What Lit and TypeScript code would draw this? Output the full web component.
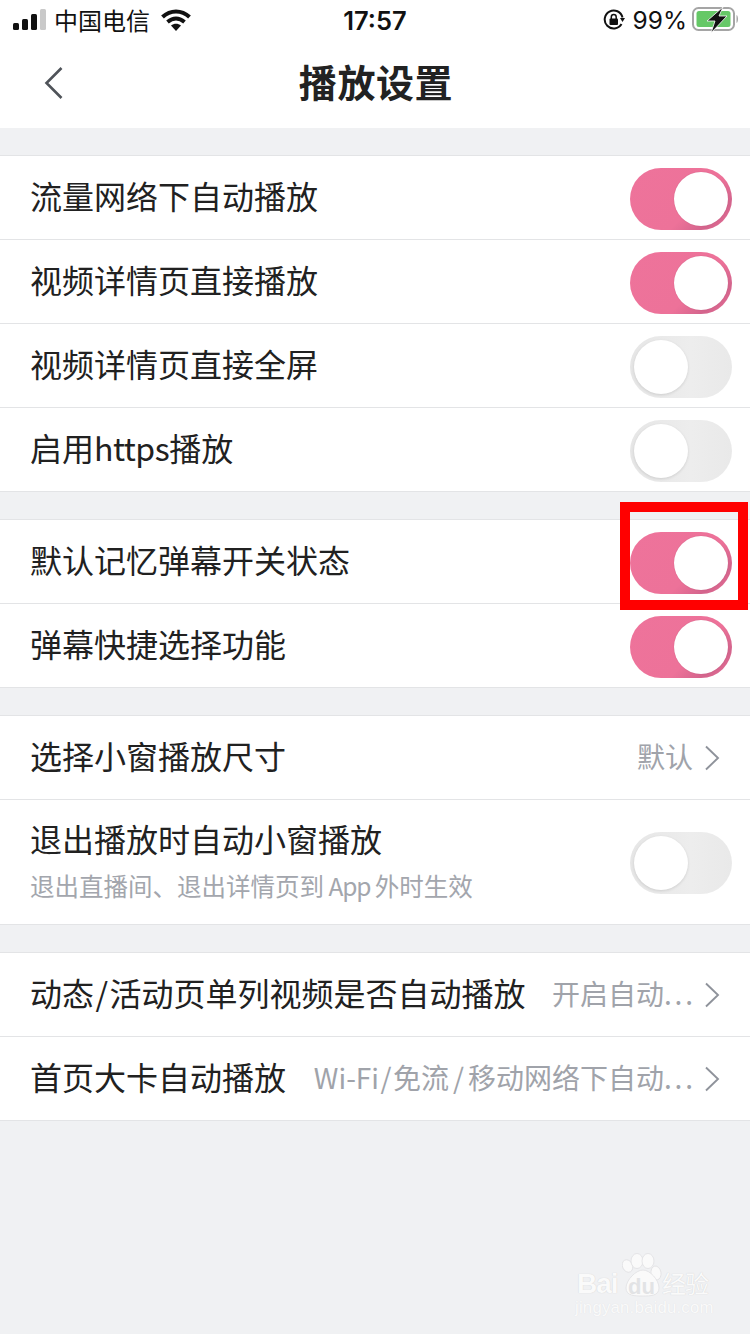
import { LitElement, html, css, svg } from 'lit';
import { customElement, property } from 'lit/decorators.js';

@customElement('ui-switch')
export class UISwitch extends LitElement {
  @property({ type: Boolean }) on = false;

  static styles = css`
    :host {
      display: block;
      flex: none;
      margin-top: 2px;
    }

    .track {
      display: flex;
      width: 102px;
      height: 62px;
      box-sizing: border-box;
      padding: 4px;
      border-radius: 31px;
      background: linear-gradient(90deg, #e6e6e6 0, #ededed 60%, #e9e9e9 100%);
    }

    .track.on {
      justify-content: flex-end;
      background: linear-gradient(135deg, #ee739b 0, #ed7299 62%, #d3648c 82%, #ea7098 100%);
    }

    .knob {
      width: 54px;
      height: 54px;
      border-radius: 50%;
      background: #fff;
      box-shadow: 0 1px 3px rgba(0, 0, 0, 0.12);
    }

    .track.on .knob {
      box-shadow: 0 0 1px rgba(120, 30, 60, 0.3);
    }
  `;

  render() {
    return html`<div class="track ${this.on ? 'on' : ''}"><div class="knob"></div></div>`;
  }
}

const chevron = html`<svg class="chev" width="16" height="26" viewBox="0 0 16 26">
  <path d="M2 1.5 L14 13 L2 24.5" fill="none" stroke="#8f939b" stroke-width="1.9" />
</svg>`;

const paw = svg`
  <g fill="#fafafa" stroke="#dfe0e2" stroke-width="0.8">
    <ellipse cx="5.500" cy="16" rx="5" ry="6.500" transform="rotate(-25 5.500 16)" />
    <ellipse cx="15" cy="11" rx="6" ry="7.500" />
    <ellipse cx="26" cy="11" rx="6" ry="7.500" />
    <ellipse cx="34" cy="23" rx="5" ry="7" transform="rotate(-10 34 23)" />
    <path d="M4 38 C4 30 14 20 21 20 C28 20 37 30 37 38 C37 46 28 46 21 46 C13 46 4 46 4 38 Z" />
  </g>`;

@customElement('app-root')
export class AppRoot extends LitElement {
  static styles = css`
    :host {
      display: block;
      position: relative;
      width: 750px;
      height: 1334px;
      overflow: hidden;
      background: #f0f1f3;
      font-family: 'Noto Sans CJK SC', 'Liberation Sans', sans-serif;
      color: #212121;
    }

    .top {
      height: 128px;
      background: #fff;
    }

    .status {
      display: flex;
      align-items: center;
      height: 40px;
      padding: 0 10px 0 13px;
      box-sizing: border-box;
      color: #111;
    }

    .carrier {
      font-size: 24px;
      line-height: 40px;
      margin-left: 8px;
    }

    .wifi {
      margin-left: 11px;
    }

    .time {
      position: absolute;
      left: 0;
      right: 0;
      top: 0;
      text-align: center;
      font-family: 'Inter', 'Liberation Sans', sans-serif;
      font-size: 25.5px;
      font-weight: 600;
      line-height: 42px;
    }

    .status-right {
      display: flex;
      align-items: center;
      margin-left: auto;
    }

    .pct {
      font-family: 'Inter', 'Liberation Sans', sans-serif;
      font-size: 24.5px;
      margin: 0 5px 0 8px;
      line-height: 42px;
    }

    .nav {
      display: flex;
      align-items: center;
      justify-content: center;
      position: relative;
      height: 88px;
    }

    .back {
      position: absolute;
      left: 44px;
      top: 26px;
    }

    .title {
      font-size: 38px;
      font-weight: 700;
      line-height: 88px;
      letter-spacing: 0.6px;
      margin: -6px 0 0 2px;
      color: #222;
    }

    .group {
      margin-top: 27px;
      background: #fff;
      border-top: 1px solid #e3e4e6;
    }

    .row {
      display: flex;
      align-items: center;
      height: 84px;
      box-sizing: border-box;
      padding: 0 18px 0 30px;
      border-bottom: 1px solid #e3e4e6;
    }

    .row.tall {
      height: 125px;
    }

    .label {
      flex: none;
      font-size: 32px;
      line-height: 44px;
      white-space: nowrap;
    }

    .row > .label {
      margin-bottom: 6px;
    }

    .tall .label {
      margin-top: -5px;
    }

    .https {
      letter-spacing: -0.5px;
    }

    .sl {
      margin: 0 1.5px;
    }

    .sub {
      font-size: 24.5px;
      line-height: 36px;
      margin-top: 8px;
      color: #a3a6ad;
      white-space: nowrap;
      word-spacing: -1px;
    }

    .app {
      letter-spacing: -1.2px;
    }

    .spacer {
      flex: 1;
    }

    .value {
      font-size: 28px;
      line-height: 44px;
      margin-bottom: 4px;
      color: #a0a3aa;
      white-space: nowrap;
      margin-right: 11px;
    }

    .dots {
      letter-spacing: 2.8px;
      margin-right: -2.800px;
    }

    .vs1 {
      margin: 0 1.5px;
    }

    .vs2 {
      margin: 0 4px;
    }

    .chev {
      flex: none;
      margin-right: 12px;
    }

    .mark {
      position: absolute;
      left: 620px;
      top: 502px;
      width: 128px;
      height: 108px;
      box-sizing: border-box;
      border: 10px solid #ff0000;
    }

    .wm {
      position: absolute;
      left: 575px;
      top: 1250px;
      width: 140px;
      height: 70px;
      color: #fafafa;
      text-shadow: 0 0 1px #c9cacc;
    }

    .wm svg {
      position: absolute;
      left: 47px;
      top: 0;
    }

    .wm span {
      position: absolute;
      white-space: nowrap;
    }

    .bai {
      left: 2px;
      top: 16px;
      font: 700 28px/36px 'Liberation Sans', sans-serif;
      letter-spacing: -1px;
    }

    .du {
      left: 53px;
      top: 26px;
      font: 700 22px/22px 'Liberation Sans', sans-serif;
      color: #e2e3e5;
      text-shadow: none;
    }

    .jy {
      left: 87px;
      top: 17px;
      font-size: 24px;
      line-height: 32px;
      letter-spacing: -1px;
    }

    .wm .url {
      left: 0;
      top: 47px;
      font: 16.8px/22px 'Liberation Sans', sans-serif;
      letter-spacing: 0.2px;
      text-shadow: 0 0 1px #dcdde0;
    }
  `;

  private switchRow(label: unknown, on: boolean) {
    return html`<div class="row">
      <div class="label">${label}</div>
      <div class="spacer"></div>
      <ui-switch ?on=${on}></ui-switch>
    </div>`;
  }

  private linkRow(label: unknown, value: unknown) {
    return html`<div class="row">
      <div class="label">${label}</div>
      <div class="spacer"></div>
      <div class="value">${value}</div>
      ${chevron}
    </div>`;
  }

  render() {
    return html`
      <div class="top">
        <div class="status">
          <svg width="33" height="22" viewBox="0 0 33 22">
            <rect x="0" y="14" width="6" height="7" rx="1.5" fill="#111" />
            <rect x="9" y="10" width="6" height="11" rx="1.5" fill="#111" />
            <rect x="18" y="5" width="6" height="16" rx="1.5" fill="#111" />
            <rect x="27" y="0" width="6" height="21" rx="1.5" fill="#c9c9c9" />
          </svg>
          <span class="carrier">中国电信</span>
          <svg class="wifi" width="30" height="22" viewBox="0 0 30 22">
            <path d="M1.500 8 C9.500 0.500 20.500 0.500 28.500 8" fill="none" stroke="#111" stroke-width="4" />
            <path d="M6.500 13 C12 8.500 18 8.500 23.500 13" fill="none" stroke="#111" stroke-width="4" />
            <path d="M10 16.500 C13 14 17 14 20 16.500 L15 22 Z" fill="#111" />
          </svg>
          <span class="time">17:57</span>
          <div class="status-right">
            <svg width="22" height="22" viewBox="0 0 22 22">
              <path d="M18.500 15 A9 9 0 1 1 19.500 8.500" fill="none" stroke="#111" stroke-width="2" />
              <path d="M17 9 L22 9 L19.500 13 Z" fill="#111" />
              <rect x="6.500" y="9.500" width="8.500" height="6.500" rx="1" fill="#111" />
              <path d="M8.300 10 V8 A2.400 2.400 0 0 1 13.200 8 V10" fill="none" stroke="#111" stroke-width="1.500" />
            </svg>
            <span class="pct">99%</span>
            <svg width="48" height="26" viewBox="0 1 48 26">
              <rect x="1" y="2" width="41" height="22" rx="5.500" fill="none" stroke="#a5a5a5" stroke-width="2" />
              <rect x="4.500" y="5" width="34" height="16" rx="2.500" fill="#66c867" />
              <path d="M44.500 9 C46.500 10 46.500 16 44.500 17 Z" fill="#a5a5a5" />
              <path d="M31 1 L15 15 H23 L19 27 L35 10 H27 Z" fill="#111" stroke="#fff" stroke-width="0.8" />
            </svg>
          </div>
        </div>
        <div class="nav">
          <svg class="back" width="20" height="34" viewBox="0 0 20 34">
            <path d="M17.500 2 L2.500 17 L17.500 32" fill="none" stroke="#4f5359" stroke-width="2.600" />
          </svg>
          <div class="title">播放设置</div>
        </div>
      </div>

      <div class="group">
        ${this.switchRow('流量网络下自动播放', true)}
        ${this.switchRow('视频详情页直接播放', true)}
        ${this.switchRow('视频详情页直接全屏', false)}
        ${this.switchRow(html`启用<span class="https">https</span>播放`, false)}
      </div>

      <div class="group">
        ${this.switchRow('默认记忆弹幕开关状态', true)}
        ${this.switchRow('弹幕快捷选择功能', true)}
      </div>

      <div class="group">
        ${this.linkRow('选择小窗播放尺寸', '默认')}
        <div class="row tall">
          <div>
            <div class="label">退出播放时自动小窗播放</div>
            <div class="sub">退出直播间、退出详情页到 <span class="app">App</span> 外时生效</div>
          </div>
          <div class="spacer"></div>
          <ui-switch></ui-switch>
        </div>
      </div>

      <div class="group">
        ${this.linkRow(
          html`动态<span class="sl">/</span>活动页单列视频是否自动播放`,
          html`开启自动<span class="dots">...</span>`,
        )}
        ${this.linkRow(
          '首页大卡自动播放',
          html`Wi-Fi<span class="vs1">/</span>免流<span class="vs2">/</span>移动网络下自动<span class="dots">...</span>`,
        )}
      </div>

      <div class="mark"></div>

      <div class="wm">
        <svg width="44" height="50" viewBox="0 0 44 50">${paw}</svg>
        <span class="bai">Bai</span>
        <span class="du">du</span>
        <span class="jy">经验</span>
        <span class="url">jingyan.baidu.com</span>
      </div>
    `;
  }
}
